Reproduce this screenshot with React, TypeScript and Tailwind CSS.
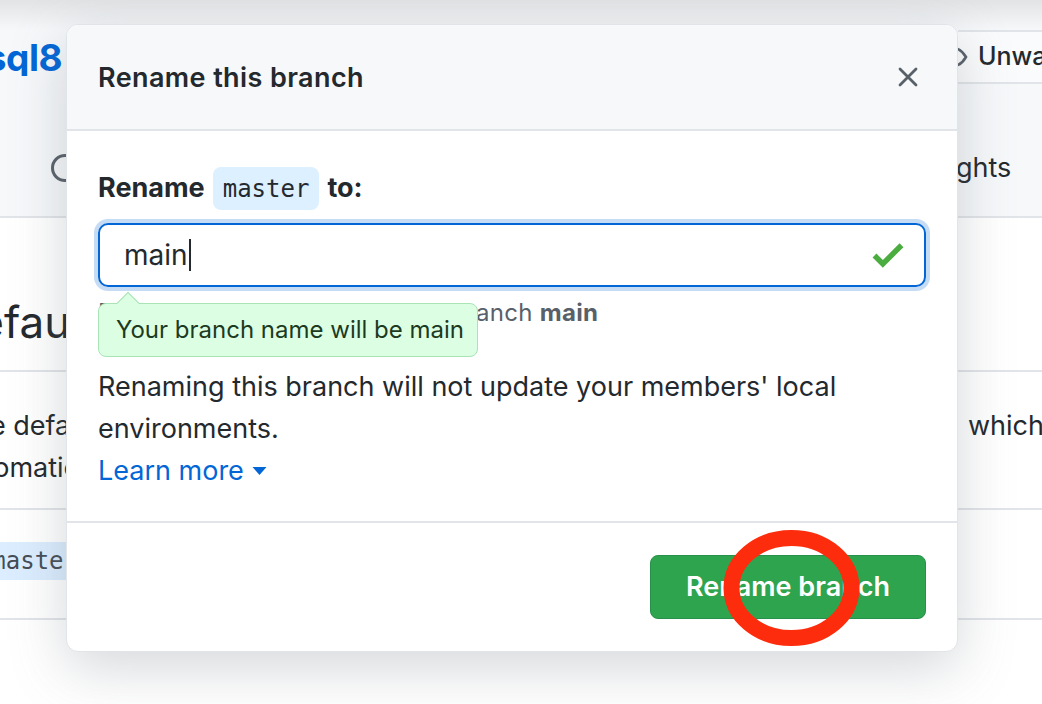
import React from "react";

const font = { fontFamily: "Inter, 'Noto Sans', 'Liberation Sans', sans-serif" };
const mono = { fontFamily: "'DejaVu Sans Mono', 'Liberation Mono', monospace" };

function Row({
  left,
  right,
  className,
}: {
  left: React.ReactNode;
  right: React.ReactNode;
  className?: string;
}) {
  return (
    <div className={"flex justify-between " + (className ?? "")}>
      <div className="w-[66px] overflow-hidden flex justify-end whitespace-nowrap">{left}</div>
      <div className="flex-1" />
      <div className="w-[84px] overflow-hidden whitespace-nowrap">{right}</div>
    </div>
  );
}

export default function App() {
  return (
    <div className="relative w-[1042px] h-[704px] overflow-hidden bg-white text-[#24292e]" style={font}>
      {/* background page */}
      <div className="relative bg-[#f6f8fa] border-b-2 border-[#e1e4e8] pt-[30px] h-[218px]">
        <div className="absolute left-0 right-0 top-0 h-[30px] bg-gradient-to-b from-[#e2e3e5] to-[#f6f8fa]/0" />
        <Row
          className="h-[54px] items-center"
          left={<span className="text-[37px] font-bold text-[#0366d6] pr-[4px] leading-none tracking-[-0.5px]">sql8</span>}
          right={
            <div className="h-[54px] -ml-[30px] border-y-2 border-[#e1e4e8] bg-[#fafbfc] flex items-center pl-[10px] gap-[10px]">
              <svg width="30" height="22" viewBox="0 0 30 22" className="shrink-0">
                <path d="M2 11c3.5-6 8-9 13-9s9.5 3 13 9c-3.5 6-8 9-13 9S5.5 17 2 11z" fill="none" stroke="#586069" strokeWidth="2.6" />
                <circle cx="15" cy="11" r="3.5" fill="#586069" />
              </svg>
              <span className="text-[25px] font-medium">Unwatch</span>
            </div>
          }
        />
        <Row
          className="h-[56px] mt-[56px] items-center"
          left={
            <div className="w-[66px] relative h-[56px]">
              <svg width="30" height="30" viewBox="0 0 30 30" className="absolute left-[50px] top-[13px]">
                <circle cx="15" cy="15" r="12.5" fill="none" stroke="#586069" strokeWidth="3" />
              </svg>
            </div>
          }
          right={<span className="text-[27px] -ml-[46px] block">Insights</span>}
        />
      </div>
      <Row
        className="mt-[76px] pb-[20px] border-b-2 border-[#e1e4e8]"
        left={<span className="text-[44px] leading-[56px] -mr-[30px]">Default</span>}
        right={<span />}
      />
      <Row
        className="pt-[33px] pb-[19px] border-b-2 border-[#e1e4e8] text-[27px] leading-[42px]"
        left={
          <div className="flex flex-col items-end">
            <span className="-mr-[36px]">The default</span>
            <span className="-mr-[13px]">automatic</span>
          </div>
        }
        right={<span className="pl-[10px] block">which</span>}
      />
      <Row
        className="pt-[32px] pb-[38px] border-b-2 border-[#e1e4e8]"
        left={
          <span className="bg-[#dbedff] text-[24px] leading-[38px] px-[8px] -mr-[20px] text-[#444d56]" style={mono}>
            master
          </span>
        }
        right={<span />}
      />

      {/* modal */}
      <div className="absolute left-[66px] top-[24px] w-[892px] h-[628px] bg-white rounded-[12px] border border-[#e1e4e8] shadow-[0_16px_56px_rgba(100,110,120,0.28)] overflow-hidden flex flex-col">
        <div className="h-[106px] shrink-0 bg-[#f6f8fa] border-b-2 border-[#e1e4e8] flex items-center justify-between pl-[31px] pr-[38px]">
          <h2 className="text-[27px] font-semibold leading-none tracking-[0.4px]">Rename this branch</h2>
          <svg width="22" height="22" viewBox="0 0 22 22">
            <path d="M3 3l16 16M19 3L3 19" stroke="#586069" strokeWidth="2.8" strokeLinecap="round" />
          </svg>
        </div>

        <div className="relative flex-1 px-[31px] pt-[36px]">
          <div className="flex items-center gap-[8px] text-[27px] font-bold h-[43px]">
            <span>Rename</span>
            <span className="bg-[#ddf0ff] rounded-[8px] px-[10px] h-[43px] flex items-center text-[24px] font-normal" style={mono}>
              master
            </span>
            <span>to:</span>
          </div>

          <div className="mt-[13px] h-[64px] rounded-[10px] border-2 border-[#0366d6] shadow-[0_0_0_4px_#c6dcf5] flex items-center pl-[24px] pr-[18px]">
            <span className="text-[28px] leading-none">main</span>
            <span className="w-[2px] h-[32px] bg-[#24292e] ml-[1px]" />
            <div className="flex-1" />
            <svg width="36" height="27" viewBox="0 3 12 10.5">
              <path d="M12 5l-8 8-4-4 1.5-1.5L4 10l6.5-6.5L12 5z" fill="#4bac3f" />
            </svg>
          </div>

          <div className="mt-[8px] text-[24px] leading-[36px] tracking-[0.3px] text-[#586069] whitespace-nowrap">
            Branch will be renamed to the branch <span className="font-bold">main</span>
          </div>

          <div className="absolute left-[31px] top-[172px] w-[380px] h-[54px] rounded-[8px] bg-[#dcffe4] border border-[#a8e4b6] flex items-center pl-[17px] text-[24px] text-[#1c3a22]">
            <div className="absolute -top-[9px] left-[21px] w-[16px] h-[16px] bg-[#dcffe4] border-l border-t border-[#a8e4b6] rotate-45" />
            <span className="relative">Your branch name will be main</span>
          </div>

          <p className="mt-[35px] text-[27px] leading-[42px]">
            Renaming this branch will not update your members' local
            <br />
            environments.
            <br />
            <span className="text-[#0366d6] inline-flex items-center gap-[8px]">
              Learn more
              <svg width="15" height="8" viewBox="0 0 14 8">
                <path d="M0 0h14L7 8z" fill="#0366d6" />
              </svg>
            </span>
          </p>
        </div>

        <div className="h-[130px] shrink-0 border-t-2 border-[#e1e4e8] flex items-center justify-end pr-[31px]">
          <button className="w-[276px] h-[64px] rounded-[8px] bg-[#2ea44f] border border-[#27904a] text-white text-[27px] font-semibold">
            Rename branch
          </button>
        </div>
      </div>

      {/* red annotation */}
      <svg className="absolute left-[716px] top-[523px]" width="150" height="130" viewBox="0 0 150 130">
        <ellipse cx="75.5" cy="65" rx="60" ry="50" fill="none" stroke="#fd2c0c" strokeWidth="16" />
      </svg>
    </div>
  );
}
